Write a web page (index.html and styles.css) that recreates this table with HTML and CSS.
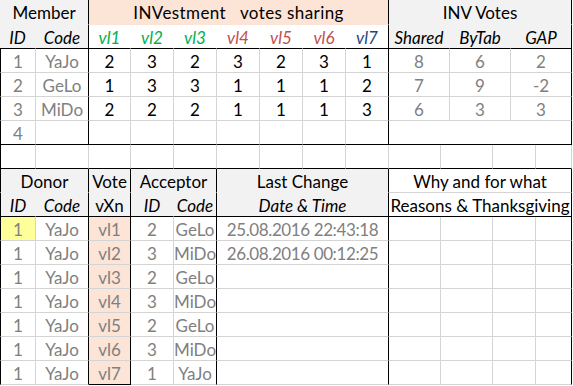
FILE: index.html
```html
<!DOCTYPE html>
<html>
<head>
<meta charset="utf-8">
<link rel="stylesheet" href="styles.css">
</head>
<body>
<div class="sheet">
  <div class="grid top">
    <div class="c gray nb bR s2">Member</div>
    <div class="c peach nb bR s7 title">INVestment&nbsp;&nbsp; votes sharing</div>
    <div class="c gray nb bR s3">INV Votes</div>

    <div class="c gray it nr bB">ID</div>
    <div class="c gray it bR bB">Code</div>
    <div class="c it green nr bB">vl1</div>
    <div class="c it green nr bB">vl2</div>
    <div class="c it green nr bB">vl3</div>
    <div class="c it red nr bB">vl4</div>
    <div class="c it red nr bB">vl5</div>
    <div class="c it red nr bB">vl6</div>
    <div class="c it blue bR bB">vl7</div>
    <div class="c gray it nr bB">Shared</div>
    <div class="c gray it nr bB">ByTab</div>
    <div class="c gray it bR bB">GAP</div>

    <div class="c bL muted">1</div><div class="c bR muted">YaJo</div>
    <div class="c">2</div><div class="c">3</div><div class="c">2</div><div class="c">3</div><div class="c">2</div><div class="c">3</div><div class="c bR">1</div>
    <div class="c muted">8</div><div class="c muted">6</div><div class="c bR muted">2</div>

    <div class="c bL muted">2</div><div class="c bR muted">GeLo</div>
    <div class="c">1</div><div class="c">3</div><div class="c">3</div><div class="c">1</div><div class="c">1</div><div class="c">1</div><div class="c bR">2</div>
    <div class="c muted">7</div><div class="c muted">9</div><div class="c bR muted">-2</div>

    <div class="c bL muted">3</div><div class="c bR muted">MiDo</div>
    <div class="c">2</div><div class="c">2</div><div class="c">2</div><div class="c">1</div><div class="c">1</div><div class="c">1</div><div class="c bR">3</div>
    <div class="c muted">6</div><div class="c muted">3</div><div class="c bR muted">3</div>

    <div class="c bL bB muted">4</div><div class="c bR bB"></div>
    <div class="c bB"></div><div class="c bB"></div><div class="c bB"></div><div class="c bB"></div><div class="c bB"></div><div class="c bB"></div><div class="c bR bB"></div>
    <div class="c bR bB s3"></div>
  </div>

  <div class="grid bottom">
    <div class="c bL bB"></div><div class="c bB"></div><div class="c bB"></div><div class="c bB"></div><div class="c bB"></div><div class="c bB"></div><div class="c bB"></div><div class="c bB"></div><div class="c bB"></div><div class="c bB"></div><div class="c bB"></div><div class="c bB"></div><div class="c bB"></div>

    <div class="c gray bL nb bR s2">Donor</div>
    <div class="c gray nb bR">Vote</div>
    <div class="c gray nb bR s2">Acceptor</div>
    <div class="c gray nb bR s4">Last Change</div>
    <div class="c bR s4">Why and for what</div>

    <div class="c gray it bL nr bB">ID</div>
    <div class="c gray it bR bB">Code</div>
    <div class="c gray bR bB">vXn</div>
    <div class="c gray it nr bB">ID</div>
    <div class="c gray it bR bB">Code</div>
    <div class="c gray it bR bB s4">Date &amp; Time</div>
    <div class="c bR bB s4">Reasons &amp; Thanksgiving</div>

    <div class="c bL muted yellow">1</div><div class="c bR muted">YaJo</div><div class="c peach bR muted">vl1</div><div class="c muted">2</div><div class="c bR muted">GeLo</div><div class="c bR muted s4 date">25.08.2016 22:43:18</div><div class="c"></div><div class="c"></div><div class="c"></div><div class="c bR"></div>
    <div class="c bL muted">1</div><div class="c bR muted">YaJo</div><div class="c peach bR muted">vl2</div><div class="c muted">3</div><div class="c bR muted">MiDo</div><div class="c bR muted s4 date">26.08.2016 00:12:25</div><div class="c"></div><div class="c"></div><div class="c"></div><div class="c bR"></div>
    <div class="c bL muted">1</div><div class="c bR muted">YaJo</div><div class="c peach bR muted">vl3</div><div class="c muted">2</div><div class="c bR muted">GeLo</div><div class="c bR s4"></div><div class="c"></div><div class="c"></div><div class="c"></div><div class="c bR"></div>
    <div class="c bL muted">1</div><div class="c bR muted">YaJo</div><div class="c peach bR muted">vl4</div><div class="c muted">3</div><div class="c bR muted">MiDo</div><div class="c bR s4"></div><div class="c"></div><div class="c"></div><div class="c"></div><div class="c bR"></div>
    <div class="c bL muted">1</div><div class="c bR muted">YaJo</div><div class="c peach bR muted">vl5</div><div class="c muted">2</div><div class="c bR muted">GeLo</div><div class="c bR s4"></div><div class="c"></div><div class="c"></div><div class="c"></div><div class="c bR"></div>
    <div class="c bL muted">1</div><div class="c bR muted">YaJo</div><div class="c peach bR muted">vl6</div><div class="c muted">3</div><div class="c bR muted">MiDo</div><div class="c bR s4"></div><div class="c"></div><div class="c"></div><div class="c"></div><div class="c bR"></div>
    <div class="c bL muted">1</div><div class="c bR muted">YaJo</div><div class="c peach bR bB muted">vl7</div><div class="c muted">1</div><div class="c bR muted">YaJo</div><div class="c bR s4"></div><div class="c"></div><div class="c"></div><div class="c"></div><div class="c bR"></div>
  </div>
</div>
</body>
</html>
```
FILE: styles.css
```css
html, body {
  margin: 0;
  padding: 0;
  background: #ffffff;
}

.sheet {
  width: 573px;
  font-family: Lato, "Open Sans", sans-serif;
  font-size: 17px;
  color: #000000;
}

.grid {
  display: grid;
}

.top {
  grid-template-columns: 36px 53px 42px 43px 43px 43px 43px 43px 43px 61px 61px 61px;
  grid-template-rows: 25px 24px 24px 24px 24px 24px;
}

.bottom {
  grid-template-columns: 36px 53px 42px 43px 43px 43px 43px 43px 43px 52px 52px 43px 36px;
  grid-auto-rows: 24px;
}

.c {
  box-sizing: border-box;
  display: flex;
  align-items: center;
  justify-content: center;
  padding-top: 1px;
  white-space: pre;
  border-right: 1px solid #d4d4d4;
  border-bottom: 1px solid #d4d4d4;
}

.title { letter-spacing: 0.4px; }
.date { letter-spacing: -0.4px; }

.s2 { grid-column: span 2; }
.s3 { grid-column: span 3; }
.s4 { grid-column: span 4; }
.s7 { grid-column: span 7; }

.gray { background: #f2f2f2; }
.peach { background: #fce4d6; }
.yellow { background: #ffff99; }

.it { font-style: italic; }
.muted { color: #808080; }
.green { color: #00b050; }
.red { color: #c0504d; }
.blue { color: #1f497d; }

.nr { border-right-color: transparent; }
.nb { border-bottom-color: transparent; }
.bR { border-right-color: #000000; }
.bB { border-bottom-color: #000000; }
.bL { border-left: 1px solid #000000; }
```
